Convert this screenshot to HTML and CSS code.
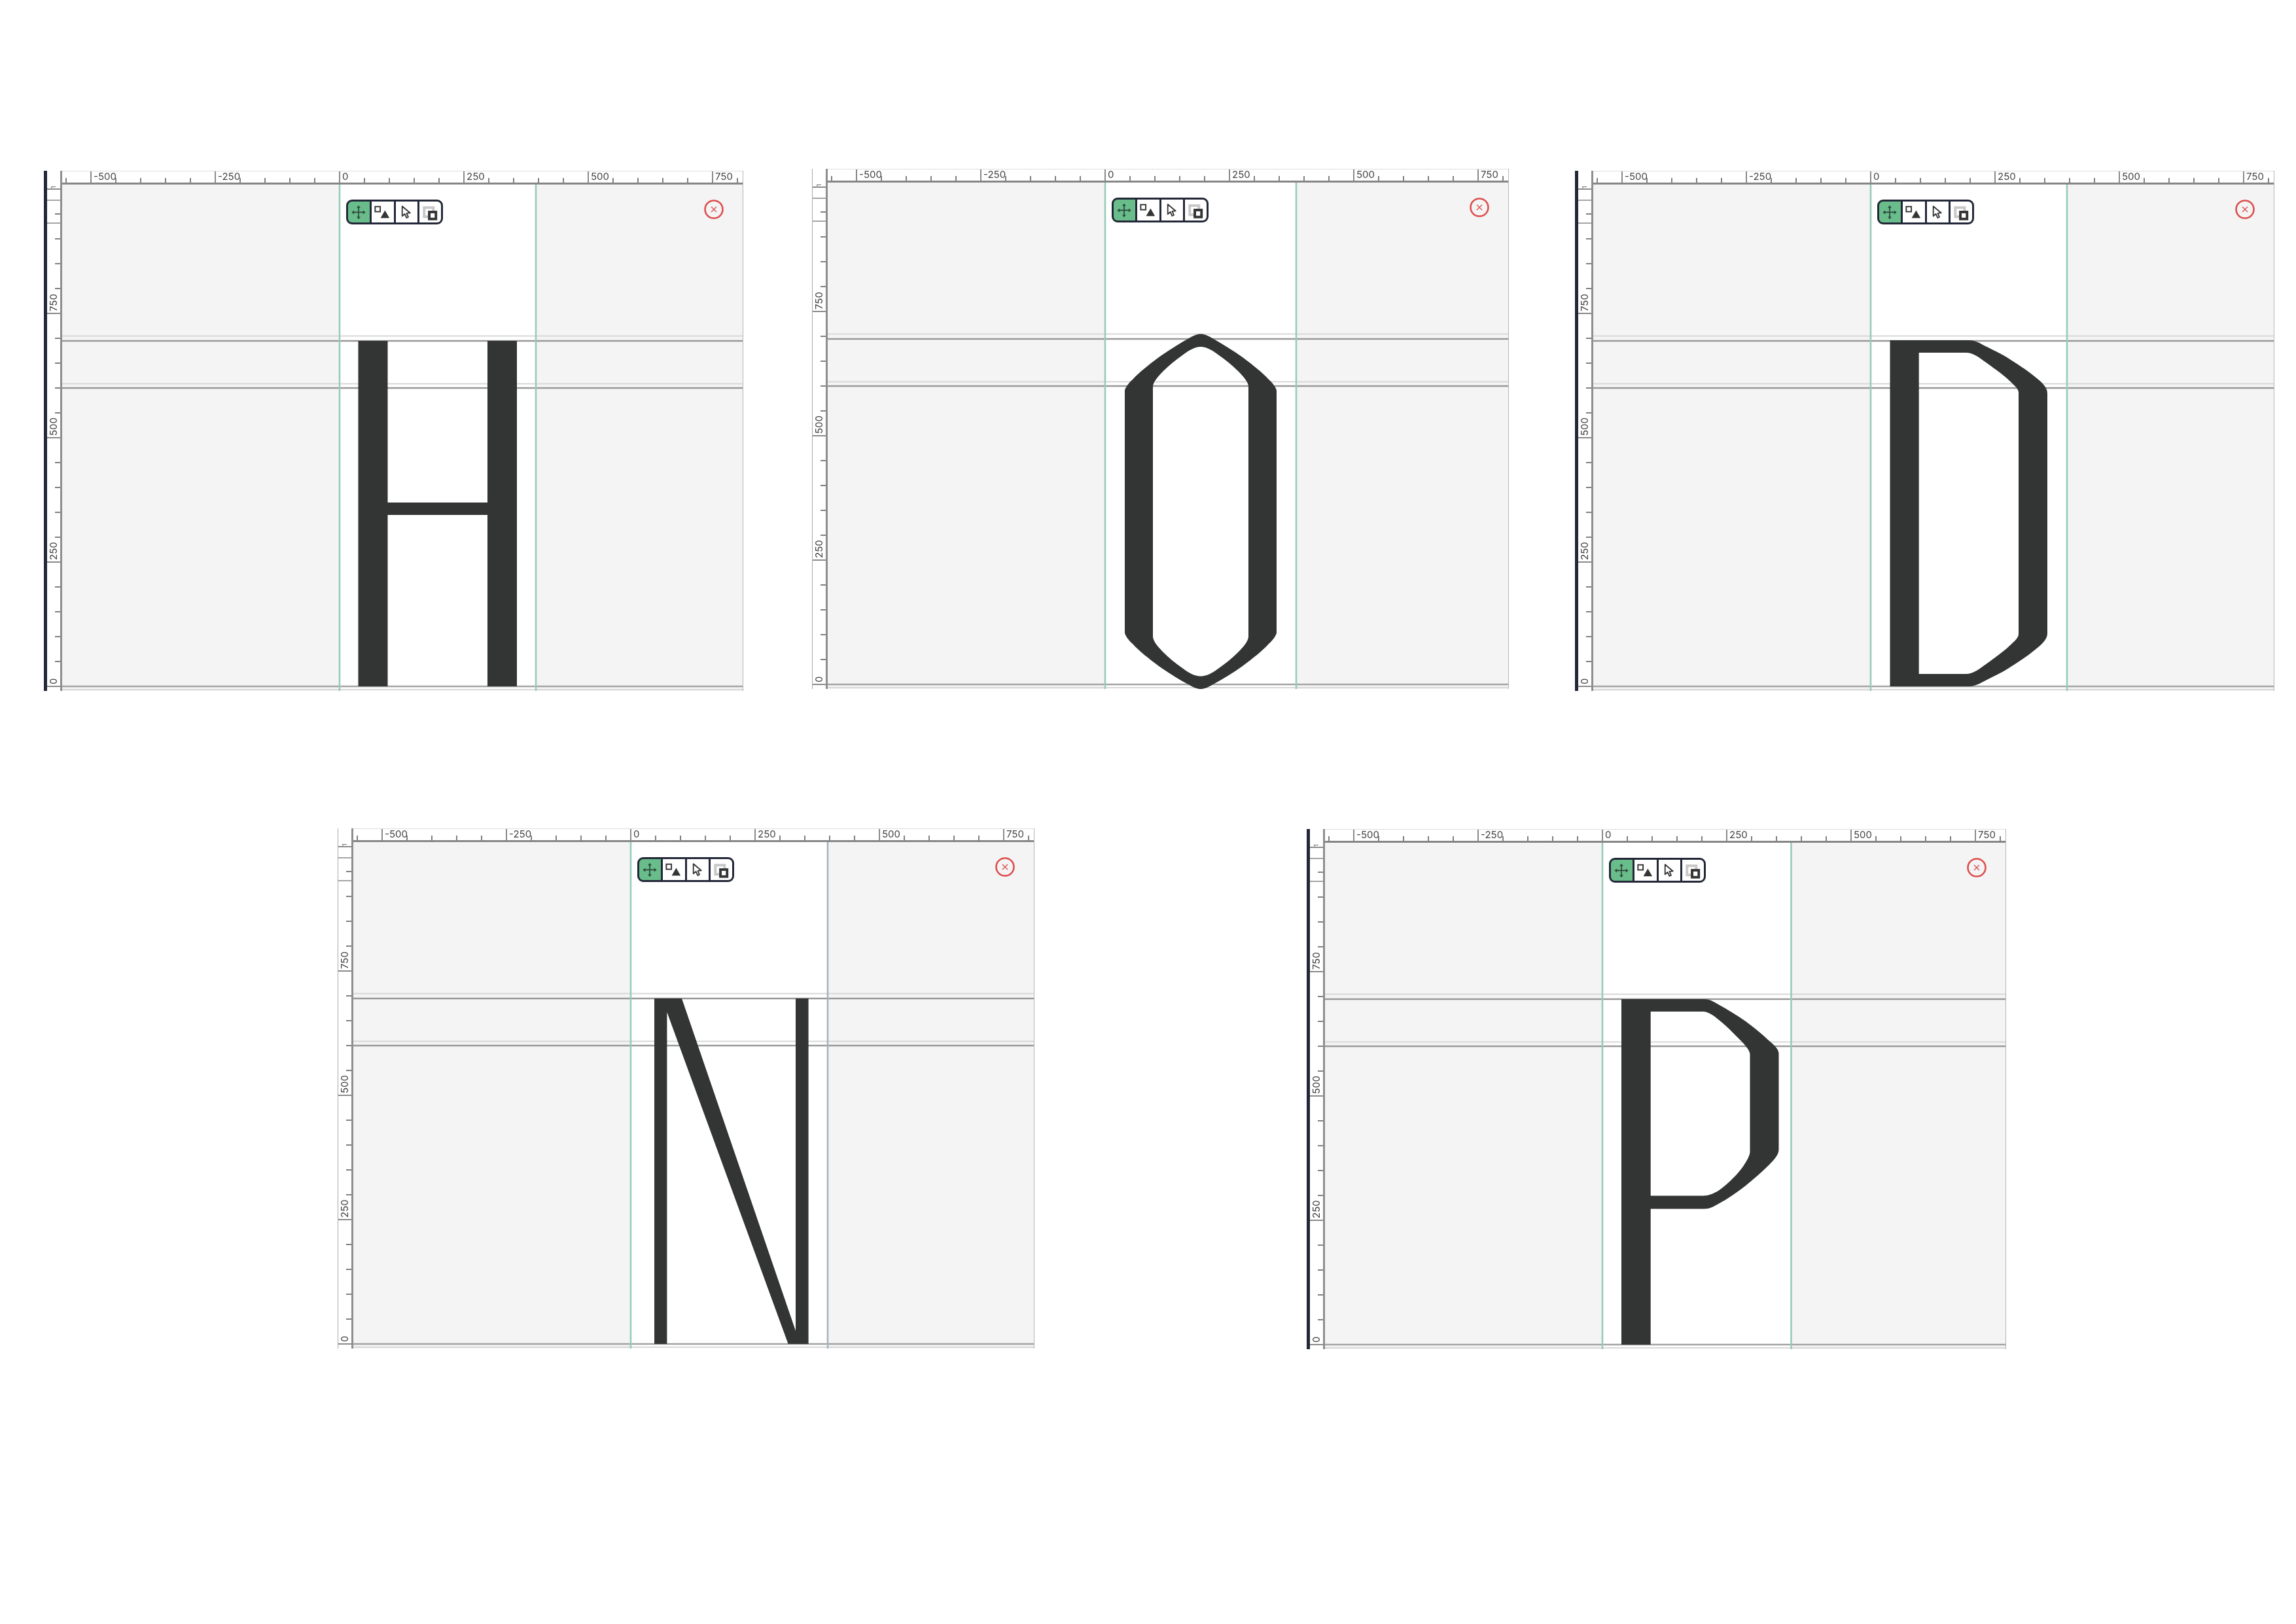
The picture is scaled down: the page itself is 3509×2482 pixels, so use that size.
FILE: index.html
```html
<!DOCTYPE html>
<html lang="en">
<head>
    <meta charset="UTF-8">
    <title>Glyph editor: H O D N P</title>
    <link rel="stylesheet" href="styles.css">
</head>
<body>

<!-- shared icons and metric lines -->
<svg class="sprites" aria-hidden="true">
    <symbol id="icon-move" viewBox="0 0 34 32">
        <path d="M16.5 8V25M8 16.5H25" fill="none" stroke="#2f4a3d" stroke-width="1.8"/>
        <path d="M16.5 5.5l-3 4h6zM16.5 27.5l-3-4h6zM5.5 16.5l4-3v6zM27.5 16.5l-4-3v6z" fill="#2f4a3d"/>
    </symbol>
    <symbol id="icon-shapes" viewBox="0 0 34 32">
        <rect x="5.5" y="7.5" width="8" height="8" fill="#fff" stroke="#333534" stroke-width="2"/>
        <path d="M21 13.5L28 25.5H14z" fill="#333534"/>
    </symbol>
    <symbol id="icon-pointer" viewBox="0 0 34 32">
        <path d="M10 7V22.5L14 19L16.8 25.2L19.6 24L17 18L22.5 17.5Z" fill="#fff" stroke="#333534" stroke-width="1.9" stroke-linejoin="round"/>
    </symbol>
    <symbol id="icon-overlap" viewBox="0 0 34 32">
        <rect x="7.5" y="9" width="14.5" height="14.5" fill="#fff" stroke="#c8c8c8" stroke-width="4"/>
        <rect x="15.5" y="16" width="10.5" height="11" fill="#fff" stroke="#333534" stroke-width="4"/>
    </symbol>
    <symbol id="icon-close" viewBox="0 0 30 30">
        <circle cx="15" cy="15" r="13.5" fill="none" stroke="#de4f4f" stroke-width="2.6"/>
        <path d="M11 11L19 19M19 11L11 19" fill="none" stroke="#de4f4f" stroke-width="1.4"/>
    </symbol>
    <g id="metrics" fill="none">
        <path d="M-424 -535.5H616M-424 -462.5H616M-424 5H616" stroke="#d8d8d8" stroke-width="2"/>
        <path d="M-424 -528H616M-424 -456H616" stroke="#999" stroke-width="2.4"/>
        <path d="M-424 0H616" stroke="#a3a3a3" stroke-width="2.6"/>
    </g>
</svg>

<div class="sheet">

    <!-- H -->
    <section class="panel panel-dark panel-h">
        <div class="corner"></div>
        <div class="ruler-top">
            <span>-500</span><span>-250</span><span>0</span><span>250</span><span>500</span><span>750</span>
        </div>
        <div class="ruler-left">
            <span>0</span><span>250</span><span>500</span><span>750</span><span>1</span>
            <div class="ruler-box"></div>
        </div>
        <div class="canvas">
            <svg class="stage" width="1040" height="774" viewBox="-424 -767 1040 774">
                <rect x="0" y="-767" width="300" height="774" fill="#fff"/>
                <use href="#metrics"/>
                <path d="M0 -767V7M300 -767V7" class="guides"/>
                <path class="glyph" d="M28.5 -528H73.5V-281H226V-528H271V0H226V-262H73.5V0H28.5Z"/>
            </svg>
            <div class="toolbar">
                <div class="tool tool-active"><svg><use href="#icon-move"/></svg></div>
                <div class="tool"><svg><use href="#icon-shapes"/></svg></div>
                <div class="tool"><svg><use href="#icon-pointer"/></svg></div>
                <div class="tool"><svg><use href="#icon-overlap"/></svg></div>
            </div>
            <svg class="close"><use href="#icon-close"/></svg>
        </div>
    </section>

    <!-- O -->
    <section class="panel panel-o">
        <div class="corner"></div>
        <div class="ruler-top">
            <span>-500</span><span>-250</span><span>0</span><span>250</span><span>500</span><span>750</span>
        </div>
        <div class="ruler-left">
            <span>0</span><span>250</span><span>500</span><span>750</span><span>1</span>
            <div class="ruler-box"></div>
        </div>
        <div class="canvas">
            <svg class="stage" width="1040" height="774" viewBox="-424 -767 1040 774">
                <rect x="0" y="-767" width="292" height="774" fill="#fff"/>
                <use href="#metrics"/>
                <path d="M0 -767V7M292 -767V7" class="guides"/>
                <path class="glyph" fill-rule="evenodd" d="M146 -535.5C152 -535.5 157 -533 164 -529C180 -520 196 -510 210 -500C226 -488 240 -477 250 -466C257 -460 262 -452 262 -449L262 -79C262 -76 257 -68 250 -62C240 -51 226 -40 210 -28C196 -18 180 -8 164 0.5C157 4.5 152 7 146 7C140 7 135 4.5 128 0.5C112 -8 96 -18 82 -28C66 -40 52 -51 42 -62C35 -68 30 -76 30 -79L30 -449C30 -452 35 -460 42 -466C52 -477 66 -488 82 -500C96 -510 112 -520 128 -529C135 -533 140 -535.5 146 -535.5Z
                M146 -516C155 -516 165 -510 174 -503C184 -496 194 -488 203 -479C211 -471 219 -462 219 -455L219 -73.5C219 -66 211 -57 203 -49C194 -40 184 -32 174 -25C165 -18 155 -12.5 146 -12.5C137 -12.5 127 -18 118 -25C108 -32 98 -40 89 -49C81 -57 73 -66 73 -73.5L73 -455C73 -462 81 -471 89 -479C98 -488 108 -496 118 -503C127 -510 137 -516 146 -516Z"/>
            </svg>
            <div class="toolbar">
                <div class="tool tool-active"><svg><use href="#icon-move"/></svg></div>
                <div class="tool"><svg><use href="#icon-shapes"/></svg></div>
                <div class="tool"><svg><use href="#icon-pointer"/></svg></div>
                <div class="tool"><svg><use href="#icon-overlap"/></svg></div>
            </div>
            <svg class="close"><use href="#icon-close"/></svg>
        </div>
    </section>

    <!-- D -->
    <section class="panel panel-dark panel-d">
        <div class="corner"></div>
        <div class="ruler-top">
            <span>-500</span><span>-250</span><span>0</span><span>250</span><span>500</span><span>750</span>
        </div>
        <div class="ruler-left">
            <span>0</span><span>250</span><span>500</span><span>750</span><span>1</span>
            <div class="ruler-box"></div>
        </div>
        <div class="canvas">
            <svg class="stage" width="1040" height="774" viewBox="-424 -767 1040 774">
                <rect x="0" y="-767" width="300" height="774" fill="#fff"/>
                <use href="#metrics"/>
                <path d="M0 -767V7M300 -767V7" class="guides"/>
                <path class="glyph" fill-rule="evenodd" d="M29.5 -529L150 -529C156 -529 161 -527 166 -525C180 -517 195 -511 208 -503C222 -494 238 -484 250 -474C260 -466 270 -458 270 -448L270 -81C270 -71 260 -63 250 -55C238 -45 222 -35 208 -26C195 -18 180 -12 166 -4C161 -2 156 0 150 0L29.5 0Z
                M73.7 -510L146 -510C155 -510 164 -504 172 -498C183 -490 196 -481 208 -471C216 -463 226 -456 226 -449L226 -80C226 -73 216 -66 208 -58C196 -48 183 -39 172 -31C164 -25 155 -19 146 -19L73.7 -19Z"/>
            </svg>
            <div class="toolbar">
                <div class="tool tool-active"><svg><use href="#icon-move"/></svg></div>
                <div class="tool"><svg><use href="#icon-shapes"/></svg></div>
                <div class="tool"><svg><use href="#icon-pointer"/></svg></div>
                <div class="tool"><svg><use href="#icon-overlap"/></svg></div>
            </div>
            <svg class="close"><use href="#icon-close"/></svg>
        </div>
    </section>

    <!-- N -->
    <section class="panel panel-n">
        <div class="corner"></div>
        <div class="ruler-top">
            <span>-500</span><span>-250</span><span>0</span><span>250</span><span>500</span><span>750</span>
        </div>
        <div class="ruler-left">
            <span>0</span><span>250</span><span>500</span><span>750</span><span>1</span>
            <div class="ruler-box"></div>
        </div>
        <div class="canvas">
            <svg class="stage" width="1040" height="774" viewBox="-424 -767 1040 774">
                <rect x="0" y="-767" width="301" height="774" fill="#fff"/>
                <use href="#metrics"/>
                <path d="M0 -767V7" class="guides"/>
                <path d="M301 -767V7" class="guides guides-grey"/>
                <path class="glyph" d="M36 -528H78L252 -20V-528H271.6V0H240.6L55.4 -507V0H36Z"/>
            </svg>
            <div class="toolbar">
                <div class="tool tool-active"><svg><use href="#icon-move"/></svg></div>
                <div class="tool"><svg><use href="#icon-shapes"/></svg></div>
                <div class="tool"><svg><use href="#icon-pointer"/></svg></div>
                <div class="tool"><svg><use href="#icon-overlap"/></svg></div>
            </div>
            <svg class="close"><use href="#icon-close"/></svg>
        </div>
    </section>

    <!-- P -->
    <section class="panel panel-dark panel-p">
        <div class="corner"></div>
        <div class="ruler-top">
            <span>-500</span><span>-250</span><span>0</span><span>250</span><span>500</span><span>750</span>
        </div>
        <div class="ruler-left">
            <span>0</span><span>250</span><span>500</span><span>750</span><span>1</span>
            <div class="ruler-box"></div>
        </div>
        <div class="canvas">
            <svg class="stage" width="1040" height="774" viewBox="-424 -767 1040 774">
                <rect x="0" y="-767" width="288.5" height="774" fill="#fff"/>
                <use href="#metrics"/>
                <path d="M0 -767V7M288.5 -767V7" class="guides"/>
                <path class="glyph" fill-rule="evenodd" d="M29 -528L156 -528C164 -528 170 -524 177 -520C192 -512 206 -503 219 -494C232 -484 244 -475 254 -465C262 -458 269.5 -452 269.5 -445L269.5 -298C269.5 -290 262 -282 254 -274C244 -264 232 -254 219 -243C206 -233 192 -223 177 -215C170 -211 164 -207.5 156 -207.5L73.7 -207.5L73.7 0L29 0Z
                M73.7 -509L154 -509C161 -509 170 -503 177 -497C190 -487 204 -472 214 -462C221 -454 225.5 -449 225.5 -443L225.5 -295C225.5 -288 218 -276 211 -267C202 -256 190 -244 177 -235C170 -231 162 -227.5 154 -227.5L73.7 -227.5Z"/>
            </svg>
            <div class="toolbar">
                <div class="tool tool-active"><svg><use href="#icon-move"/></svg></div>
                <div class="tool"><svg><use href="#icon-shapes"/></svg></div>
                <div class="tool"><svg><use href="#icon-pointer"/></svg></div>
                <div class="tool"><svg><use href="#icon-overlap"/></svg></div>
            </div>
            <svg class="close"><use href="#icon-close"/></svg>
        </div>
    </section>

</div>
</body>
</html>
```

FILE: styles.css
```css
body {
    margin: 0;
    background: #fff;
    font-family: Inter, "Liberation Sans", sans-serif;
}
.sprites {
    position: absolute;
    width: 0;
    height: 0;
}
.sheet {
    position: relative;
    width: 3509px;
    height: 2482px;
}

/* the five editor windows sit freely on the sheet */
.panel {
    position: absolute;
    display: grid;
    grid-template-columns: 23px 1040px;
    grid-template-rows: 21px 774px;
    border-left: 1px solid #a8a8a8;
    border-right: 1px solid #b5b5b5;
    filter: blur(0.5px);
}
.panel-dark {
    border-left: 5px solid #232838;
}
.panel-h { left: 67px; top: 261px; }
.panel-o { left: 1241px; top: 258px; }
.panel-d { left: 2407px; top: 261px; }
.panel-n { left: 516px; top: 1266px; }
.panel-p { left: 1997px; top: 1267px; }

.corner {
    border-right: 3px solid #8e8e8e;
}

/* rulers: 50 units = 38px, a labelled tick every 250 units */
.ruler-top {
    display: flex;
    box-sizing: border-box;
    padding-left: 43px;
    overflow: hidden;
    border-top: 1px solid #dedede;
    border-bottom: 3px solid #868686;
    background: linear-gradient(to right, #808080 2px, transparent 2px) left 5px bottom 0 / 38px 7px repeat-x;
    color: #444;
    font-size: 15px;
    line-height: 16px;
}
.ruler-top span {
    flex: 0 0 190px;
    box-sizing: border-box;
    padding-left: 3px;
    border-left: 2px solid #8a8a8a;
}
.ruler-left {
    position: relative;
    display: flex;
    flex-direction: column-reverse;
    box-sizing: border-box;
    padding-bottom: 6px;
    overflow: hidden;
    border-right: 3px solid #8e8e8e;
    background: linear-gradient(to top, #808080 2px, transparent 2px) right 0 bottom 6px / 8px 38px repeat-y;
    color: #444;
    font-size: 15px;
    line-height: 16px;
}
/* turned half way round, so its top border is drawn under the label */
.ruler-left span {
    flex: 0 0 190px;
    box-sizing: border-box;
    padding: 2px 2px 0 0;
    border-top: 2px solid #8a8a8a;
    writing-mode: vertical-rl;
    transform: rotate(180deg);
}
/* only the start of the 1000 label fits under the top ruler */
.ruler-left span:last-of-type {
    padding-top: 0;
    font-size: 9px;
}
.ruler-box {
    position: absolute;
    top: 23px;
    left: 0;
    right: 0;
    height: 37px;
    box-sizing: border-box;
    border-top: 2px solid #a5a5a5;
    border-bottom: 2px solid #a5a5a5;
}

/* drawing area */
.canvas {
    position: relative;
    background: #f4f4f4;
}
.stage {
    display: block;
}
.guides {
    fill: none;
    stroke: #97cbbb;
    stroke-width: 2.6;
}
.guides-grey {
    stroke: #a3b4bd;
}
.glyph {
    fill: #333534;
}

.toolbar {
    position: absolute;
    top: 23px;
    left: 434px;
    width: 148px;
    height: 38px;
    box-sizing: border-box;
    display: grid;
    grid-template-columns: repeat(4, 1fr);
    gap: 3px;
    overflow: hidden;
    background: #232838;
    border: 3px solid #232838;
    border-radius: 9px;
}
.tool {
    background: #fff;
}
.tool svg {
    display: block;
    width: 33px;
    height: 32px;
}
.tool-active {
    background: #68bd8b;
}
.close {
    position: absolute;
    top: 23px;
    left: 981px;
    width: 30px;
    height: 30px;
}
```
